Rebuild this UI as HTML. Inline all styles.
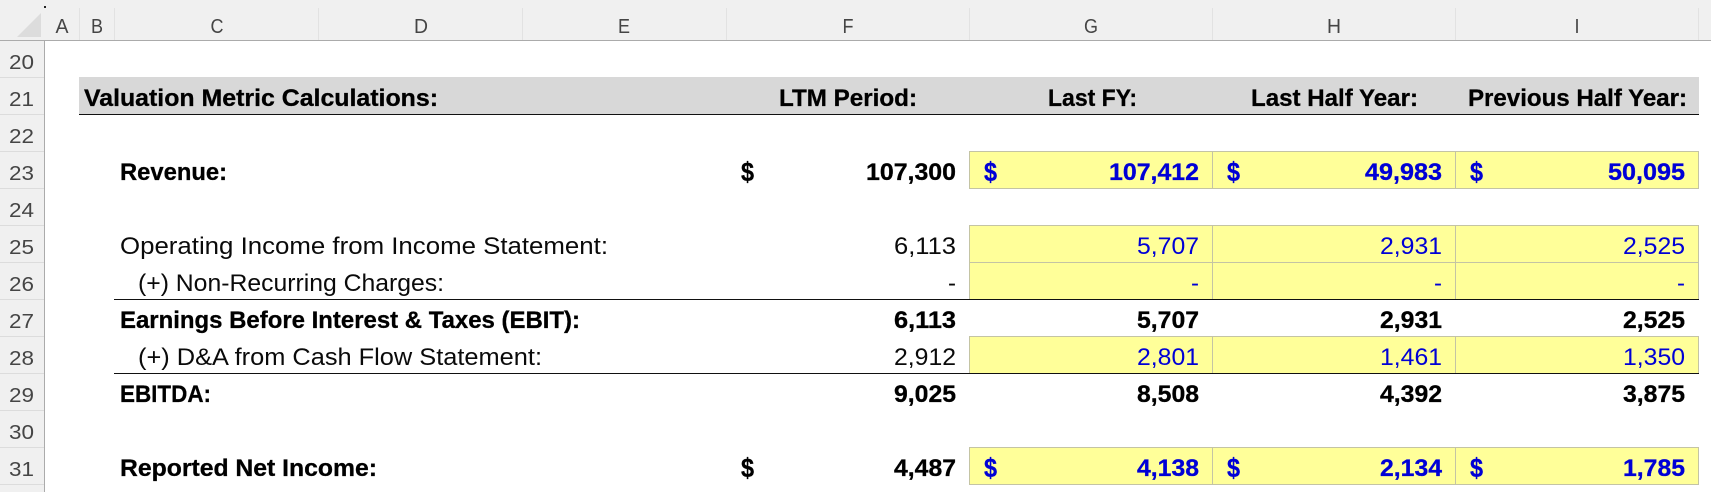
<!DOCTYPE html>
<html lang="en">
<head>
<meta charset="utf-8">
<title>Valuation Metric Calculations</title>
<style>
html,body{margin:0;padding:0;background:#fff;width:1711px;height:492px;overflow:hidden}
svg{display:block}
text{font-family:"Liberation Sans",Arial,sans-serif;font-size:24px;fill:#0a0a0a}
.b{font-weight:700;fill:#000;stroke:#000;stroke-width:.3px}
.u{fill:#0000d6}
.b.u{stroke:#0000d6}
.d{font-size:27px}
.h{font-size:20px;fill:#454545;text-anchor:middle}
.r{font-size:20px;fill:#454545}
</style>
</head>
<body>
<svg xmlns="http://www.w3.org/2000/svg" width="1711" height="492" viewBox="0 0 1711 492">
<!-- chrome -->
<rect x="0" y="0" width="1711" height="40" fill="#f0f0f0"/>
<rect x="0" y="0" width="44" height="492" fill="#f0f0f0"/>
<polygon points="41,13 41,37 17,37" fill="#dcdcdc"/>
<rect x="44" y="6" width="2" height="2" fill="#222"/>
<g fill="#e2e2e2">
<rect x="79" y="8" width="1" height="32"/><rect x="114" y="8" width="1" height="32"/>
<rect x="318" y="8" width="1" height="32"/><rect x="522" y="8" width="1" height="32"/>
<rect x="726" y="8" width="1" height="32"/><rect x="969" y="8" width="1" height="32"/>
<rect x="1212" y="8" width="1" height="32"/><rect x="1455" y="8" width="1" height="32"/>
<rect x="1698" y="8" width="1" height="32"/>
</g>
<g fill="#dcdcdc">
<rect x="0" y="77" width="44" height="1"/><rect x="0" y="114" width="44" height="1"/>
<rect x="0" y="151" width="44" height="1"/><rect x="0" y="188" width="44" height="1"/>
<rect x="0" y="225" width="44" height="1"/><rect x="0" y="262" width="44" height="1"/>
<rect x="0" y="299" width="44" height="1"/><rect x="0" y="336" width="44" height="1"/>
<rect x="0" y="373" width="44" height="1"/><rect x="0" y="410" width="44" height="1"/>
<rect x="0" y="447" width="44" height="1"/><rect x="0" y="484" width="44" height="1"/>
</g>
<rect x="0" y="40" width="1711" height="1" fill="#ababab"/>
<rect x="44" y="40" width="1" height="452" fill="#ababab"/>

<text class="h" x="62" y="33" textLength="13" lengthAdjust="spacingAndGlyphs">A</text>
<text class="h" x="97" y="33" textLength="12" lengthAdjust="spacingAndGlyphs">B</text>
<text class="h" x="217" y="33" textLength="13" lengthAdjust="spacingAndGlyphs">C</text>
<text class="h" x="421" y="33" textLength="14" lengthAdjust="spacingAndGlyphs">D</text>
<text class="h" x="624" y="33" textLength="12" lengthAdjust="spacingAndGlyphs">E</text>
<text class="h" x="848" y="33" textLength="11" lengthAdjust="spacingAndGlyphs">F</text>
<text class="h" x="1091" y="33" textLength="14" lengthAdjust="spacingAndGlyphs">G</text>
<text class="h" x="1334" y="33" textLength="14" lengthAdjust="spacingAndGlyphs">H</text>
<text class="h" x="1577" y="33" textLength="5" lengthAdjust="spacingAndGlyphs">I</text>

<text class="r" x="9" y="69" textLength="25" lengthAdjust="spacingAndGlyphs">20</text>
<text class="r" x="9" y="106" textLength="25" lengthAdjust="spacingAndGlyphs">21</text>
<text class="r" x="9" y="143" textLength="25" lengthAdjust="spacingAndGlyphs">22</text>
<text class="r" x="9" y="180" textLength="25" lengthAdjust="spacingAndGlyphs">23</text>
<text class="r" x="9" y="217" textLength="25" lengthAdjust="spacingAndGlyphs">24</text>
<text class="r" x="9" y="254" textLength="25" lengthAdjust="spacingAndGlyphs">25</text>
<text class="r" x="9" y="291" textLength="25" lengthAdjust="spacingAndGlyphs">26</text>
<text class="r" x="9" y="328" textLength="25" lengthAdjust="spacingAndGlyphs">27</text>
<text class="r" x="9" y="365" textLength="25" lengthAdjust="spacingAndGlyphs">28</text>
<text class="r" x="9" y="402" textLength="25" lengthAdjust="spacingAndGlyphs">29</text>
<text class="r" x="9" y="439" textLength="25" lengthAdjust="spacingAndGlyphs">30</text>
<text class="r" x="9" y="476" textLength="25" lengthAdjust="spacingAndGlyphs">31</text>

<!-- header band -->
<rect x="79" y="77" width="1620" height="37" fill="#d8d8d8"/>
<rect x="79" y="114" width="1620" height="1" fill="#111"/>

<!-- yellow input cells -->
<g fill="#ffff99" stroke="#c4c4a4" stroke-width="1">
<rect x="969.5" y="151.5" width="243" height="37"/><rect x="1212.5" y="151.5" width="243" height="37"/><rect x="1455.5" y="151.5" width="243" height="37"/>
<rect x="969.5" y="225.5" width="243" height="37"/><rect x="1212.5" y="225.5" width="243" height="37"/><rect x="1455.5" y="225.5" width="243" height="37"/>
<rect x="969.5" y="262.5" width="243" height="37"/><rect x="1212.5" y="262.5" width="243" height="37"/><rect x="1455.5" y="262.5" width="243" height="37"/>
<rect x="969.5" y="336.5" width="243" height="37"/><rect x="1212.5" y="336.5" width="243" height="37"/><rect x="1455.5" y="336.5" width="243" height="37"/>
<rect x="969.5" y="447.5" width="243" height="37"/><rect x="1212.5" y="447.5" width="243" height="37"/><rect x="1455.5" y="447.5" width="243" height="37"/>
</g>
<rect x="114" y="299" width="1585" height="1" fill="#111"/>
<rect x="114" y="373" width="1585" height="1" fill="#111"/>

<!-- row 21 -->
<text class="b" x="84" y="106" textLength="354" lengthAdjust="spacingAndGlyphs">Valuation Metric Calculations:</text>
<text class="b" x="779" y="106" textLength="138" lengthAdjust="spacingAndGlyphs">LTM Period:</text>
<text class="b" x="1048" y="106" textLength="89" lengthAdjust="spacingAndGlyphs">Last FY:</text>
<text class="b" x="1251" y="106" textLength="167" lengthAdjust="spacingAndGlyphs">Last Half Year:</text>
<text class="b" x="1468" y="106" textLength="219" lengthAdjust="spacingAndGlyphs">Previous Half Year:</text>

<!-- row 23 -->
<text class="b" x="120" y="180" textLength="107" lengthAdjust="spacingAndGlyphs">Revenue:</text>
<text class="b d" x="741" y="181" textLength="13" lengthAdjust="spacingAndGlyphs">$</text>
<text class="b" x="866" y="180" textLength="90" lengthAdjust="spacingAndGlyphs">107,300</text>
<text class="b u d" x="984" y="181" textLength="13" lengthAdjust="spacingAndGlyphs">$</text>
<text class="b u" x="1109" y="180" textLength="90" lengthAdjust="spacingAndGlyphs">107,412</text>
<text class="b u d" x="1227" y="181" textLength="13" lengthAdjust="spacingAndGlyphs">$</text>
<text class="b u" x="1365" y="180" textLength="77" lengthAdjust="spacingAndGlyphs">49,983</text>
<text class="b u d" x="1470" y="181" textLength="13" lengthAdjust="spacingAndGlyphs">$</text>
<text class="b u" x="1608" y="180" textLength="77" lengthAdjust="spacingAndGlyphs">50,095</text>

<!-- row 25 -->
<text x="120" y="254" textLength="488" lengthAdjust="spacingAndGlyphs">Operating Income from Income Statement:</text>
<text x="894" y="254" textLength="62" lengthAdjust="spacingAndGlyphs">6,113</text>
<text class="u" x="1137" y="254" textLength="62" lengthAdjust="spacingAndGlyphs">5,707</text>
<text class="u" x="1380" y="254" textLength="62" lengthAdjust="spacingAndGlyphs">2,931</text>
<text class="u" x="1623" y="254" textLength="62" lengthAdjust="spacingAndGlyphs">2,525</text>

<!-- row 26 -->
<text x="138" y="291" textLength="306" lengthAdjust="spacingAndGlyphs">(+) Non-Recurring Charges:</text>
<text x="948" y="291" textLength="8" lengthAdjust="spacingAndGlyphs">-</text>
<text class="u" x="1191" y="291" textLength="8" lengthAdjust="spacingAndGlyphs">-</text>
<text class="u" x="1434" y="291" textLength="8" lengthAdjust="spacingAndGlyphs">-</text>
<text class="u" x="1677" y="291" textLength="8" lengthAdjust="spacingAndGlyphs">-</text>

<!-- row 27 -->
<text class="b" x="120" y="328" textLength="460" lengthAdjust="spacingAndGlyphs">Earnings Before Interest &amp; Taxes (EBIT):</text>
<text class="b" x="894" y="328" textLength="62" lengthAdjust="spacingAndGlyphs">6,113</text>
<text class="b" x="1137" y="328" textLength="62" lengthAdjust="spacingAndGlyphs">5,707</text>
<text class="b" x="1380" y="328" textLength="62" lengthAdjust="spacingAndGlyphs">2,931</text>
<text class="b" x="1623" y="328" textLength="62" lengthAdjust="spacingAndGlyphs">2,525</text>

<!-- row 28 -->
<text x="138" y="365" textLength="404" lengthAdjust="spacingAndGlyphs">(+) D&amp;A from Cash Flow Statement:</text>
<text x="894" y="365" textLength="62" lengthAdjust="spacingAndGlyphs">2,912</text>
<text class="u" x="1137" y="365" textLength="62" lengthAdjust="spacingAndGlyphs">2,801</text>
<text class="u" x="1380" y="365" textLength="62" lengthAdjust="spacingAndGlyphs">1,461</text>
<text class="u" x="1623" y="365" textLength="62" lengthAdjust="spacingAndGlyphs">1,350</text>

<!-- row 29 -->
<text class="b" x="120" y="402" textLength="91" lengthAdjust="spacingAndGlyphs">EBITDA:</text>
<text class="b" x="894" y="402" textLength="62" lengthAdjust="spacingAndGlyphs">9,025</text>
<text class="b" x="1137" y="402" textLength="62" lengthAdjust="spacingAndGlyphs">8,508</text>
<text class="b" x="1380" y="402" textLength="62" lengthAdjust="spacingAndGlyphs">4,392</text>
<text class="b" x="1623" y="402" textLength="62" lengthAdjust="spacingAndGlyphs">3,875</text>

<!-- row 31 -->
<text class="b" x="120" y="476" textLength="257" lengthAdjust="spacingAndGlyphs">Reported Net Income:</text>
<text class="b d" x="741" y="477" textLength="13" lengthAdjust="spacingAndGlyphs">$</text>
<text class="b" x="894" y="476" textLength="62" lengthAdjust="spacingAndGlyphs">4,487</text>
<text class="b u d" x="984" y="477" textLength="13" lengthAdjust="spacingAndGlyphs">$</text>
<text class="b u" x="1137" y="476" textLength="62" lengthAdjust="spacingAndGlyphs">4,138</text>
<text class="b u d" x="1227" y="477" textLength="13" lengthAdjust="spacingAndGlyphs">$</text>
<text class="b u" x="1380" y="476" textLength="62" lengthAdjust="spacingAndGlyphs">2,134</text>
<text class="b u d" x="1470" y="477" textLength="13" lengthAdjust="spacingAndGlyphs">$</text>
<text class="b u" x="1623" y="476" textLength="62" lengthAdjust="spacingAndGlyphs">1,785</text>
</svg>
</body>
</html>
